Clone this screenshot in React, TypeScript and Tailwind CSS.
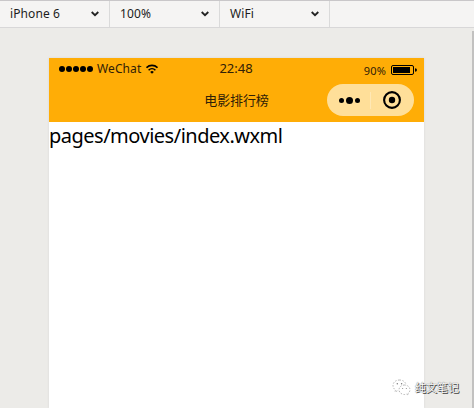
const selectors = ['iPhone 6', '100%', 'WiFi'];

function Toolbar() {
  return (
    <header className="flex h-7 shrink-0 border-t border-b border-t-[#c9c7c9] border-b-[#d8d7d8] bg-[#f5f4f3]">
      {selectors.map((label) => (
        <div key={label} className="flex w-[110px] items-center justify-between border-r border-[#dadada] pr-[10px] pl-[10px] text-[12px] leading-none tracking-[0.1px] text-[#1c1c1c]">
          <span>{label}</span>
          <svg width="8" height="6" viewBox="0 0 8 6" fill="none" stroke="#222" strokeWidth="1.8">
            <path d="m.7 1 3.3 3.2L7.3 1" />
          </svg>
        </div>
      ))}
    </header>
  );
}

function StatusBar() {
  return (
    <div className="grid h-[22px] grid-cols-3 items-center text-[#302006]">
      <div className="flex items-center pl-[10px]">
        <div className="flex gap-px">
          {[0, 1, 2, 3, 4].map((n) => (
            <i key={n} className="size-[6px] rounded-full bg-black" />
          ))}
        </div>
        <span className="ml-[4px] text-[12px] leading-none tracking-[0.1px]">WeChat</span>
        <svg className="ml-[5px]" width="12" height="10" viewBox="0 0 12 10" fill="none" stroke="black" strokeWidth="1.6">
          <path d="M.5 3.7C3.6.6 8.4.6 11.5 3.7M2.6 6.2C4.5 4.3 7.5 4.3 9.4 6.2" />
          <path d="M6 9.8 4.2 7.9Q6 6.3 7.8 7.9Z" fill="black" stroke="none" />
        </svg>
      </div>
      <span className="pr-px pb-px text-center text-[13px] leading-none">22:48</span>
      <div className="flex items-center justify-end pt-[2px] pr-[7px]">
        <span className="mr-[5px] text-[11px] leading-none tracking-[0.2px]">90%</span>
        <svg width="26" height="10" viewBox="0 0 26 10">
          <rect x=".5" y=".5" width="22" height="9" rx="1.5" fill="none" stroke="black" />
          <path d="M2 2h17v6H2ZM24 3.2q2 .3 2 1.8t-2 1.8Z" fill="black" />
        </svg>
      </div>
    </div>
  );
}

function Capsule() {
  return (
    <div className="flex h-8 w-[87px] items-center rounded-full bg-[#ffdf99]">
      <div className="flex h-[17px] w-[44px] items-center justify-center gap-[2px] border-r border-[#ffe8b5] pl-px">
        <i className="size-[5px] rounded-full bg-black" />
        <i className="size-[7px] rounded-full bg-black" />
        <i className="size-[5px] rounded-full bg-black" />
      </div>
      <svg className="ml-[12px]" width="18" height="18" viewBox="0 0 18 18">
        <circle cx="9" cy="9" r="7.9" fill="none" stroke="black" strokeWidth="2.1" />
        <circle cx="9" cy="9" r="3.2" fill="black" />
      </svg>
    </div>
  );
}

function Watermark() {
  return (
    <div className="absolute top-[379px] left-[392px] flex items-center">
      <svg width="20" height="18" viewBox="0 0 20 18" fill="white" stroke="#999" strokeWidth=".7" strokeDasharray="1.5 1.5">
        <path d="M7.5 1C3.5 1 1 3.5 1 6.5c0 2 1 3.5 2.5 4.5L3 13l2.5-1.3q3 .8 5-.5C13 10 14.5 8 14 5.5 13.5 3 11 1 7.5 1Z" />
        <path d="M12.5 6C9.5 6 7 8 7 10.7s2.5 4.8 5.5 4.8q1 0 2-.4l2 1-.5-1.7c1.2-.8 2-2.1 2-3.6C18 8 15.5 6 12.5 6Z" />
        <g fill="#777" stroke="none">
          <circle cx="5.3" cy="4.8" r=".7" /><circle cx="9.6" cy="4.8" r=".7" />
          <circle cx="10.7" cy="9.4" r=".5" /><circle cx="14.3" cy="9.4" r=".5" />
        </g>
      </svg>
      <span className="ml-[3px] text-[11px] leading-[18px] text-white [text-shadow:1px_1px_0_#444,0_0_1px_#333]">纯文笔记</span>
    </div>
  );
}

export default function App() {
  return (
    <div className="relative flex h-[408px] w-[474px] flex-col overflow-hidden bg-[#ecebe8] font-['Noto_Sans','Noto_Sans_CJK_SC',sans-serif]">
      <Toolbar />
      <main className="flex flex-1 justify-between">
        <section className="mt-[30px] ml-[49px] w-[375px] bg-white shadow-[0_0_2px_#d5d5d5]">
          <div className="h-16 bg-[#ffad06]">
            <StatusBar />
            <div className="grid h-10 grid-cols-[1fr_auto_1fr] items-center">
              <span />
              <h1 className="text-[13px] leading-none tracking-[-0.1px] text-[#302006]">电影排行榜</h1>
              <div className="flex justify-end pr-[10px]"><Capsule /></div>
            </div>
          </div>
          <p className="text-[20px] leading-[27px] tracking-[-0.5px] whitespace-nowrap text-black">pages/movies/index.wxml</p>
        </section>
        <div className="mt-[3px] w-[2px] bg-[#c2c1c0]" />
      </main>
      <Watermark />
    </div>
  );
}
